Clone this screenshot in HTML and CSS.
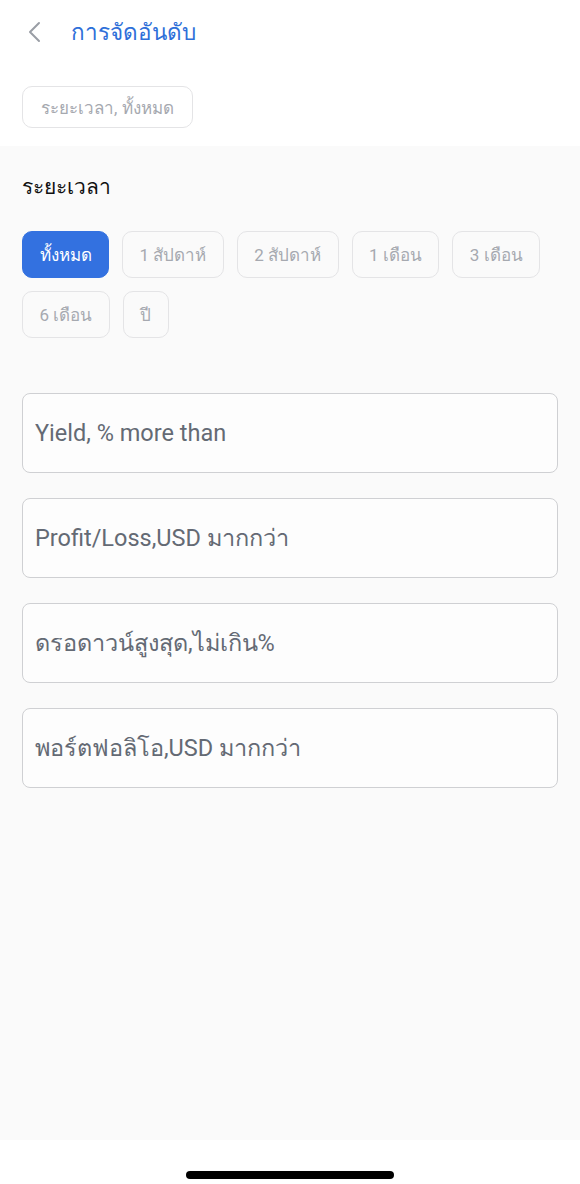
FILE: index.html
```html
<!DOCTYPE html>
<html lang="th">

<head>
    <meta charset="UTF-8">
    <meta name="viewport" content="width=device-width, initial-scale=1.0">
    <title>การจัดอันดับ</title>
    <link rel="stylesheet" href="styles.css">
</head>

<body>
    <header class="top">
        <div class="nav">
            <button class="back" aria-label="back">
                <svg width="14" height="22" viewBox="0 0 14 22">
                    <path d="M12 2 L3 11 L12 20" fill="none" stroke="#9a9ea6" stroke-width="2" stroke-linecap="round" stroke-linejoin="round"/>
                </svg>
            </button>
            <h1 class="title">การจัดอันดับ</h1>
        </div>
        <div class="summary">
            <span class="summary-chip">ระยะเวลา, ทั้งหมด</span>
        </div>
    </header>

    <main class="panel">
        <h2 class="label">ระยะเวลา</h2>
        <div class="pills">
            <button class="pill active">ทั้งหมด</button>
            <button class="pill">1 สัปดาห์</button>
            <button class="pill">2 สัปดาห์</button>
            <button class="pill">1 เดือน</button>
            <button class="pill">3 เดือน</button>
            <button class="pill">6 เดือน</button>
            <button class="pill">ปี</button>
        </div>

        <div class="fields">
            <input class="field" type="text" placeholder="Yield, % more than">
            <input class="field" type="text" placeholder="Profit/Loss,USD มากกว่า">
            <input class="field" type="text" placeholder="ดรอดาวน์สูงสุด,ไม่เกิน%">
            <input class="field" type="text" placeholder="พอร์ตฟอลิโอ,USD มากกว่า">
        </div>
    </main>

    <footer class="bottom">
        <div class="home-bar"></div>
    </footer>
</body>

</html>
```

FILE: styles.css
```css
* {
    box-sizing: border-box;
}

html,
body {
    height: 100%;
}

body {
    margin: 0;
    font-family: Roboto, 'Noto Sans', 'DejaVu Sans', sans-serif;
    color: #222;
    background-color: #fff;
    display: flex;
    flex-direction: column;
}

.top {
    background-color: #fff;
    padding: 0 22px;
}

.nav {
    display: flex;
    align-items: center;
    height: 64px;
}

.back {
    background: none;
    border: none;
    padding: 0;
    margin: 0 0 0 5px;
    width: 14px;
    height: 22px;
    cursor: pointer;
}

.title {
    margin: 0 0 0 30px;
    font-size: 22.5px;
    font-weight: 400;
    color: #2e6fd9;
}

.summary {
    padding: 22px 0 18px;
}

.summary-chip {
    display: inline-flex;
    align-items: center;
    height: 42px;
    padding: 0 18px;
    border: 1.5px solid #e4e4e6;
    border-radius: 10px;
    font-size: 17px;
    color: #a6a9b0;
}

.panel {
    flex: 1;
    background-color: #fafafa;
    padding: 24px 22px;
}

.label {
    margin: 0 0 28px;
    font-size: 21px;
    font-weight: 500;
    color: #111;
}

.pills {
    display: flex;
    flex-wrap: wrap;
    gap: 13px;
}

.pill {
    height: 47px;
    padding: 0 16.5px;
    border: 1.5px solid #e4e4e6;
    border-radius: 10px;
    background-color: #fafafa;
    font-family: inherit;
    font-size: 17px;
    color: #a6a9b0;
    cursor: pointer;
}

.pill.active {
    background-color: #3371e0;
    border-color: #3371e0;
    color: #fff;
    font-weight: 500;
}

.fields {
    display: flex;
    flex-direction: column;
    gap: 25px;
    margin-top: 55px;
}

.field {
    width: 100%;
    height: 80px;
    padding: 0 12px;
    border: 1.5px solid #cfd0d3;
    border-radius: 8px;
    background-color: #fdfdfd;
    font-family: inherit;
    font-size: 23.5px;
    color: #333;
}

.field::placeholder {
    color: #646a74;
}

.bottom {
    height: 44px;
    background-color: #fff;
    display: flex;
    justify-content: center;
    padding-top: 31px;
}

.home-bar {
    width: 208px;
    height: 8px;
    border-radius: 4px;
    background-color: #000;
}
```
